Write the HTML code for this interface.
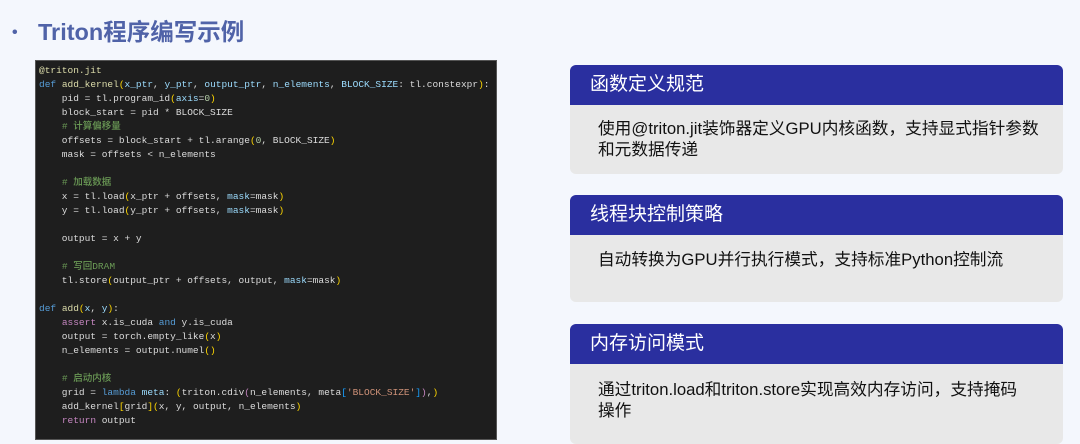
<!DOCTYPE html>
<html><head><meta charset="utf-8"><style>
body{margin:0;width:1080px;height:431px;background:#f4f7fd;position:relative;overflow:hidden;font-family:"Liberation Sans","Noto Sans CJK SC",sans-serif}
.t{position:absolute;left:12px;top:13px;font-size:23.5px;font-weight:bold;color:#5063a8;white-space:nowrap}
.t b{display:inline-block;width:26px;font-size:16px;vertical-align:3px}
.code{position:absolute;left:35px;top:60px;width:462px;height:380px;background:#1e1e1e;border:1px solid #555;box-sizing:border-box}
pre{margin:0;position:absolute;left:3px;top:3px;font-family:"Liberation Mono","Noto Sans CJK SC",monospace;font-size:9.5px;line-height:14px;color:#dcdcdc;font-weight:500}
.k{color:#569cd6}.f{color:#dcdcaa}.y{color:#ffd700}.c{color:#6a9955}.p{color:#9cdcfe}.m{color:#c586c0}.s{color:#ce9178}.n{color:#b5cea8}.b{color:#179fff}
.card{position:absolute;left:570px;width:493px;border-radius:6px;overflow:hidden;background:#e8e8e8}
.h{background:#2a2f9f;color:#fff;font-size:19px;height:40px;line-height:40px;padding-left:20px}
.bd{font-size:16.7px;color:#111;padding:13px 10px 0 28px;line-height:21px;white-space:nowrap}
</style></head><body>
<div class="t"><b>•</b>Triton程序编写示例</div>
<div class="code"><pre><span class="f">@triton.jit</span>
<span class="k">def</span> <span class="f">add_kernel</span><span class="y">(</span><span class="p">x_ptr</span>, <span class="p">y_ptr</span>, <span class="p">output_ptr</span>, <span class="p">n_elements</span>, <span class="p">BLOCK_SIZE</span>: tl.constexpr<span class="y">)</span>:
    pid = tl.program_id<span class="y">(</span><span class="p">axis</span>=<span class="n">0</span><span class="y">)</span>
    block_start = pid * BLOCK_SIZE
    <span class="c"># 计算偏移量</span>
    offsets = block_start + tl.arange<span class="y">(</span><span class="n">0</span>, BLOCK_SIZE<span class="y">)</span>
    mask = offsets &lt; n_elements

    <span class="c"># 加载数据</span>
    x = tl.load<span class="y">(</span>x_ptr + offsets, <span class="p">mask</span>=mask<span class="y">)</span>
    y = tl.load<span class="y">(</span>y_ptr + offsets, <span class="p">mask</span>=mask<span class="y">)</span>

    output = x + y

    <span class="c"># 写回DRAM</span>
    tl.store<span class="y">(</span>output_ptr + offsets, output, <span class="p">mask</span>=mask<span class="y">)</span>

<span class="k">def</span> <span class="f">add</span><span class="y">(</span><span class="p">x</span>, <span class="p">y</span><span class="y">)</span>:
    <span class="m">assert</span> x.is_cuda <span class="k">and</span> y.is_cuda
    output = torch.empty_like<span class="y">(</span>x<span class="y">)</span>
    n_elements = output.numel<span class="y">()</span>

    <span class="c"># 启动内核</span>
    grid = <span class="k">lambda</span> <span class="p">meta</span>: <span class="y">(</span>triton.cdiv<span class="m">(</span>n_elements, meta<span class="b">[</span><span class="s">'BLOCK_SIZE'</span><span class="b">]</span><span class="m">)</span>,<span class="y">)</span>
    add_kernel<span class="y">[</span>grid<span class="y">](</span>x, y, output, n_elements<span class="y">)</span>
    <span class="m">return</span> output</pre></div>
<div class="card" style="top:65px;height:109px"><div class="h">函数定义规范</div><div class="bd">使用@triton.jit装饰器定义GPU内核函数，支持显式指针参数<br>和元数据传递</div></div>
<div class="card" style="top:195px;height:107px"><div class="h">线程块控制策略</div><div class="bd" style="padding-top:14px">自动转换为GPU并行执行模式，支持标准Python控制流</div></div>
<div class="card" style="top:324px;height:120px"><div class="h">内存访问模式</div><div class="bd" style="padding-top:15px">通过triton.load和triton.store实现高效内存访问，支持掩码<br>操作</div></div>
</body></html>
